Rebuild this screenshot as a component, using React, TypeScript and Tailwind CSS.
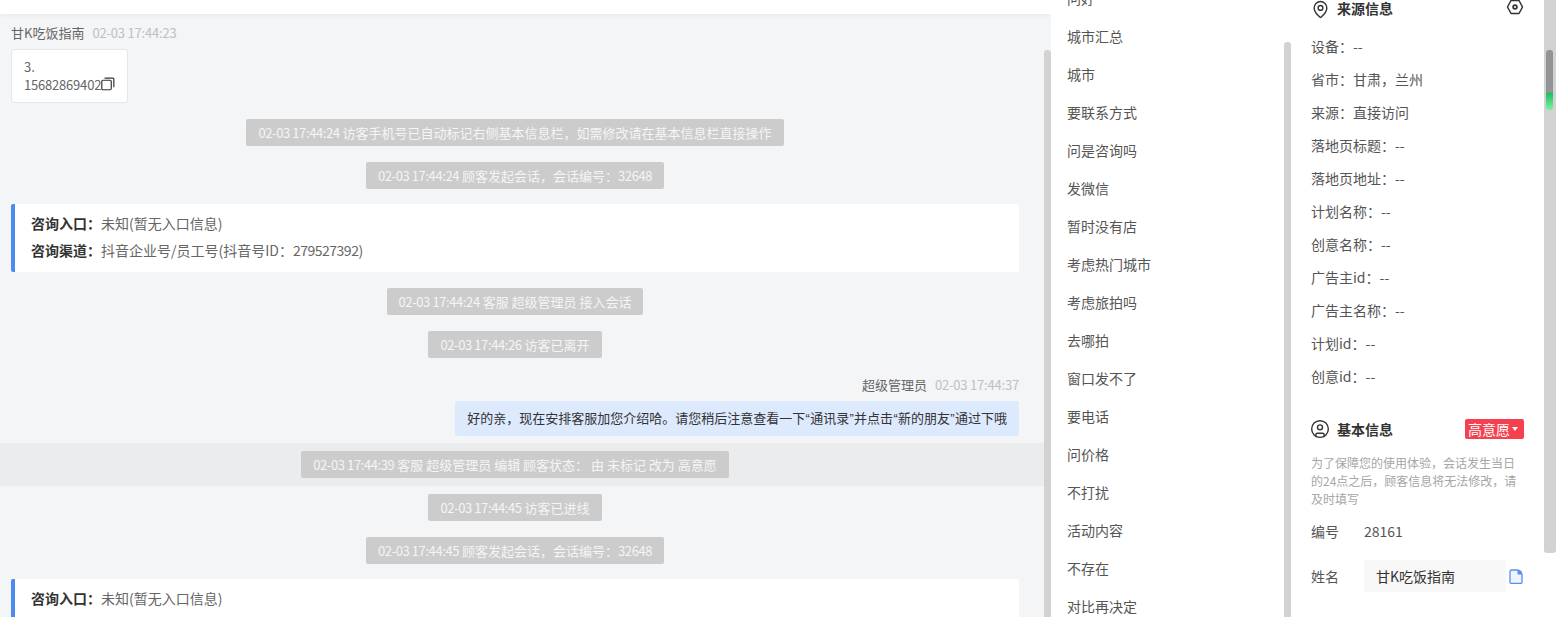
import React from 'react';
import { MapPin, CircleUser } from 'lucide-react';

const font = "[font-family:'Noto_Sans_CJK_SC','Microsoft_YaHei',sans-serif]";

const replies = [
  '问好', '城市汇总', '城市', '要联系方式', '问是咨询吗', '发微信', '暂时没有店', '考虑热门城市', '考虑旅拍吗',
  '去哪拍', '窗口发不了', '要电话', '问价格', '不打扰', '活动内容', '不存在', '对比再决定',
];

const sourceFields = [
  '设备：--', '省市：甘肃，兰州', '来源：直接访问', '落地页标题：--', '落地页地址：--', '计划名称：--',
  '创意名称：--', '广告主id：--', '广告主名称：--', '计划id：--', '创意id：--',
];

const Num: React.FC<{ children: React.ReactNode }> = ({ children }) => (
  <span className="tracking-[-0.4px]">{children}</span>
);

const Quote: React.FC<{ children: React.ReactNode }> = ({ children }) => (
  <span className="mx-[0.3px] font-['Liberation_Sans']">{children}</span>
);

const SystemRow: React.FC<{ time: string; text: string; code?: string; highlight?: boolean }> = ({ time, text, code, highlight }) => (
  <div className={`flex h-[43px] items-center justify-center pr-[14px] ${highlight ? 'bg-[#ebecee]' : ''}`}>
    <span className="flex h-[27px] items-center rounded-[2px] bg-[#cccccc] px-3 text-[13px] whitespace-pre text-[#f5f5f5]">
      <span>
        <Num>{time}</Num> {text}{code && <Num>{code}</Num>}
      </span>
    </span>
  </div>
);

const EntryCard: React.FC<{ channel?: boolean }> = ({ channel }) => (
  <div className="mr-[25px] ml-[11px] flex flex-col gap-[5px] rounded-[2px] border-l-4 border-[#4c8bf0] bg-white pt-[8px] pb-[11px] pl-4 text-[14px] leading-[22px]">
    <div>
      <span className="font-bold text-[#333333]">咨询入口：</span>
      <span className="text-[#666666]">未知(暂无入口信息)</span>
    </div>
    {channel && (
      <div>
        <span className="font-bold text-[#333333]">咨询渠道：</span>
        <span className="text-[#666666]">抖音企业号/员工号(抖音号ID：<span className="tracking-[-0.5px]">279527392</span>)</span>
      </div>
    )}
  </div>
);

const HexIcon = () => (
  <svg width="18" height="16" viewBox="0 0 18 16" fill="none" stroke="#333333" strokeWidth="1.5">
    <path d="M5 1.5h8L16.5 8 13 14.5H5L1.5 8z" strokeLinejoin="round" />
    <circle cx="9" cy="8" r="1.9" strokeWidth="1.7" />
  </svg>
);

const CopyIcon = () => (
  <svg width="14" height="14" viewBox="0 0 14 14" fill="none" stroke="#333333" strokeWidth="1.2" className="-mt-[3px]">
    <rect x="0.8" y="3.2" width="9.6" height="9.6" rx="1.2" />
    <path d="M3.6 1h8.4a1 1 0 0 1 1 1v8.4" />
  </svg>
);

const DocIcon = () => (
  <svg width="14" height="15" viewBox="0 0 14 15" fill="none">
    <path d="M1 2.5A1.5 1.5 0 0 1 2.5 1H9l4 4v8a1.5 1.5 0 0 1-1.5 1.5h-9A1.5 1.5 0 0 1 1 13z" stroke="#5b8dee" strokeWidth="1.3" fill="#eef4fe" />
    <path d="M8.5 1h2.5l2 2v2.5H8.5z" fill="#5b8dee" />
  </svg>
);

export default function App() {
  return (
    <div className={`relative flex h-[617px] w-[1556px] overflow-hidden bg-white ${font}`}>
      {/* chat column */}
      <div className="relative h-full w-[1051px] shrink-0 bg-[#f4f5f7]">
        <div className="h-[14px] bg-white shadow-[0_1px_6px_rgba(0,0,0,0.06)]" />
        <div className="pr-[7px]">
          <div className="mt-[11px] flex h-4 items-center gap-2 pl-[11px] text-[13px]">
            <span className="text-[#666666]">甘K吃饭指南</span>
            <span className="tracking-[-0.2px] text-[#c0c0c0]">02-03 17:44:23</span>
          </div>
          <div className="mt-2 ml-[11px] h-[54px] w-[117px] rounded-[3px] border border-[#e4e6ea] bg-white px-3 py-[8px] text-[13px] leading-[18px] text-[#666666]">
            <div>3.</div>
            <div className="flex items-center tracking-[-0.2px]">15682869402<CopyIcon /></div>
          </div>
          <div className="mt-2">
            <SystemRow time="02-03 17:44:24" text="访客手机号已自动标记右侧基本信息栏，如需修改请在基本信息栏直接操作" />
            <SystemRow time="02-03 17:44:24" text="顾客发起会话，会话编号：" code="32648" />
          </div>
          <div className="mt-[7px]">
            <EntryCard channel />
          </div>
          <div className="mt-2">
            <SystemRow time="02-03 17:44:24" text="客服 超级管理员 接入会话" />
            <SystemRow time="02-03 17:44:26" text="访客已离开" />
          </div>
          <div className="mt-[11px] flex h-4 items-center justify-end gap-2 pr-[25px] text-[13px]">
            <span className="text-[#666666]">超级管理员</span>
            <span className="tracking-[-0.2px] text-[#c0c0c0]">02-03 17:44:37</span>
          </div>
          <div className="mt-2 flex justify-end pr-[25px]">
            <div className="flex h-[35px] items-center rounded-[3px] bg-[#dde9fd] px-3 text-[13px] whitespace-pre text-[#333333]">
              <span>好的亲，现在安排客服加您介绍哈。请您稍后注意查看一下<Quote>“</Quote>通讯录<Quote>”</Quote>并点击<Quote>“</Quote>新的朋友<Quote>”</Quote>通过下哦</span>
            </div>
          </div>
          <div className="mt-[7px]">
            <SystemRow highlight time="02-03 17:44:39" text="客服 超级管理员 编辑 顾客状态： 由 未标记 改为 高意愿" />
            <SystemRow time="02-03 17:44:45" text="访客已进线" />
            <SystemRow time="02-03 17:44:45" text="顾客发起会话，会话编号：" code="32648" />
          </div>
          <div className="mt-[7px]">
            <EntryCard />
          </div>
        </div>
        <div className="absolute top-[50px] right-0 h-[567px] w-[7px] rounded-t-[3px] bg-[#d2d2d2]" />
      </div>

      {/* quick replies */}
      <div className="relative h-full w-[240px] shrink-0 overflow-hidden bg-white">
        <div className="-mt-[21px] flex flex-col pl-4 text-[14px] text-[#555555]">
          {replies.map((reply) => (
            <div key={reply} className="flex h-[38px] items-center">{reply}</div>
          ))}
        </div>
        <div className="absolute top-[42px] right-0 h-[575px] w-[7px] rounded-t-[3px] bg-[#d2d2d2]" />
      </div>

      {/* visitor details */}
      <div className="h-full w-[253px] shrink-0 bg-white px-5 text-[14px] text-[#555555]">
        <div className="flex h-[18px] items-center">
          <MapPin size={19} strokeWidth={1.8} className="text-[#333333]" />
          <span className="ml-[7px] -mt-[2px] font-bold leading-[16px] text-[#333333]">来源信息</span>
          <span className="ml-auto -mt-[5px] mr-0"><HexIcon /></span>
        </div>
        <div className="mt-[12px] flex flex-col">
          {sourceFields.map((field) => (
            <div key={field} className="flex h-[33px] items-center">{field}</div>
          ))}
        </div>
        <div className="mt-[26px] flex h-5 items-center">
          <CircleUser size={20} strokeWidth={1.7} className="-ml-[1px] text-[#333333]" />
          <span className="ml-[7px] font-bold text-[#333333]">基本信息</span>
          <span className="ml-auto flex h-5 items-center gap-[2px] rounded-[2px] bg-[#f5404f] pr-[6px] pl-[3px] text-[14px] text-white">
            高意愿
            <span className="h-0 w-0 border-x-[3.5px] border-t-[4px] border-x-transparent border-t-white" />
          </span>
        </div>
        <p className="mt-[15px] text-[12px] leading-[18px] text-[#a6a6a6]">
          为了保障您的使用体验，会话发生当日的24点之后，顾客信息将无法修改，请及时填写
        </p>
        <div className="mt-[13px] flex h-5 items-center">
          <span className="w-[53px]">编号</span>
          <span>28161</span>
        </div>
        <div className="mt-[19px] flex h-8 items-center">
          <span className="w-[53px]">姓名</span>
          <span className="flex h-8 w-[142px] items-center rounded-[2px] bg-[#f8f8f8] px-3 text-[#333333]">甘K吃饭指南</span>
          <span className="ml-[3px]"><DocIcon /></span>
        </div>
      </div>

      {/* page scrollbar */}
      <div className="h-[553px] w-[12px] shrink-0 rounded-b-[3px] bg-[#d2d2d2]" />
      <div className="absolute top-[50px] left-[1546px] h-[60px] w-[7px] rounded-[3px] bg-[linear-gradient(to_bottom,#949494_0%,#949494_70%,#1fbf5f_72%,#7ef0a0_100%)]" />
    </div>
  );
}
